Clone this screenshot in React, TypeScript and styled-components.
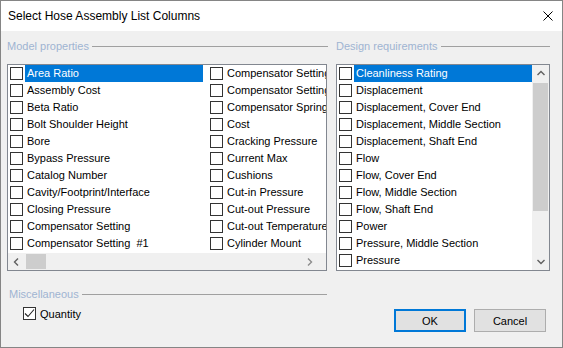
import styled, { createGlobalStyle } from 'styled-components';

const GlobalStyle = createGlobalStyle`
  html, body {
    margin: 0;
    padding: 0;
    background: #ffffff;
  }
  body {
    font-family: "Liberation Sans", Arial, sans-serif;
  }
  * {
    box-sizing: border-box;
  }
`;

const modelItems = [
  'Area Ratio',
  'Assembly Cost',
  'Beta Ratio',
  'Bolt Shoulder Height',
  'Bore',
  'Bypass Pressure',
  'Catalog Number',
  'Cavity/Footprint/Interface',
  'Closing Pressure',
  'Compensator Setting',
  'Compensator Setting  #1',
  'Compensator Setting #2',
  'Compensator Setting #3',
  'Compensator Spring',
  'Cost',
  'Cracking Pressure',
  'Current Max',
  'Cushions',
  'Cut-in Pressure',
  'Cut-out Pressure',
  'Cut-out Temperature',
  'Cylinder Mount',
];

const designItems = [
  'Cleanliness Rating',
  'Displacement',
  'Displacement, Cover End',
  'Displacement, Middle Section',
  'Displacement, Shaft End',
  'Flow',
  'Flow, Cover End',
  'Flow, Middle Section',
  'Flow, Shaft End',
  'Power',
  'Pressure, Middle Section',
  'Pressure',
];

const Chevron = ({ dir, color = '#606060' }: { dir: 'left' | 'right' | 'up' | 'down'; color?: string }) => {
  const paths = {
    left: 'M5 0.5 L1.5 4 L5 7.5',
    right: 'M2 0.5 L5.5 4 L2 7.5',
    up: 'M0.5 5 L4 1.5 L7.5 5',
    down: 'M0.5 2 L4 5.5 L7.5 2',
  };
  const horizontal = dir === 'left' || dir === 'right';
  return (
    <svg width={horizontal ? 7 : 8} height={horizontal ? 8 : 7} viewBox={horizontal ? '0 0 7 8' : '0 0 8 7'}>
      <path d={paths[dir]} fill="none" stroke={color} strokeWidth="1.4" />
    </svg>
  );
};

const CheckBox = ({ checked }: { checked?: boolean }) => (
  <Box>
    {checked && (
      <svg width="11" height="11" viewBox="0 0 11 11">
        <path d="M1 5.5 L4 8.5 L10 1.5" fill="none" stroke="#222" strokeWidth="1.1" />
      </svg>
    )}
  </Box>
);

const App = () => {
  return (
    <>
      <GlobalStyle />
      <Window>
        <TitleBar>
          <Title>Select Hose Assembly List Columns</Title>
          <svg width="10" height="10" viewBox="0 0 10 10">
            <path d="M0.5 0.5 L9.5 9.5 M9.5 0.5 L0.5 9.5" stroke="#000" strokeWidth="1" />
          </svg>
        </TitleBar>
        <Body>
          <Columns>
            <Group>
              <GroupHeader>Model properties</GroupHeader>
              <ListBox $width={320}>
                <ItemsGrid>
                  {modelItems.map((item, i) => (
                    <Item key={item}>
                      <CheckBox />
                      <ItemLabel $selected={i === 0} $width={178}>
                        {item}
                      </ItemLabel>
                    </Item>
                  ))}
                </ItemsGrid>
                <HScrollbar>
                  <ArrowButton>
                    <Chevron dir="left" />
                  </ArrowButton>
                  <HThumb />
                  <Track />
                  <ArrowButton $shift={8}>
                    <Chevron dir="right" color="#8c8c8c" />
                  </ArrowButton>
                </HScrollbar>
              </ListBox>
            </Group>
            <Group>
              <GroupHeader>Design requirements</GroupHeader>
              <ListBox $width={214} $row>
                <RowsArea>
                  {designItems.map((item, i) => (
                    <Item key={item}>
                      <CheckBox />
                      <ItemLabel $selected={i === 0}>{item}</ItemLabel>
                    </Item>
                  ))}
                </RowsArea>
                <VScrollbar>
                  <ArrowButton>
                    <Chevron dir="up" />
                  </ArrowButton>
                  <VThumb />
                  <Track />
                  <ArrowButton>
                    <Chevron dir="down" />
                  </ArrowButton>
                </VScrollbar>
              </ListBox>
            </Group>
          </Columns>
          <Bottom>
            <MiscGroup>
              <GroupHeader>Miscellaneous</GroupHeader>
              <QuantityRow>
                <CheckBox checked />
                <span>Quantity</span>
              </QuantityRow>
            </MiscGroup>
            <Buttons>
              <Button $default>OK</Button>
              <Button>Cancel</Button>
            </Buttons>
          </Bottom>
        </Body>
      </Window>
    </>
  );
};

export default App;

const Window = styled.div`
  width: 563px;
  height: 348px;
  border: 1px solid #858585;
  display: flex;
  flex-direction: column;
  background: #f0f0f0;
  overflow: hidden;
`;

const TitleBar = styled.div`
  height: 30px;
  flex: none;
  background: #ffffff;
  display: flex;
  align-items: center;
  justify-content: space-between;
  padding: 0 9px 0 7px;
`;

const Title = styled.span`
  font-size: 12px;
  color: #000000;
`;

const Body = styled.div`
  flex: 1;
  padding: 7px 12px 0 6px;
  font-size: 11px;
  color: #000000;
`;

const Columns = styled.div`
  display: grid;
  grid-template-columns: 321px 214px;
  column-gap: 8px;
`;

const Group = styled.div`
  display: flex;
  flex-direction: column;
`;

const GroupHeader = styled.div`
  height: 16px;
  display: flex;
  align-items: center;
  gap: 3px;
  color: #9fb4d2;
  font-size: 11px;
  white-space: nowrap;

  &::after {
    content: '';
    flex: 1;
    height: 1px;
    margin-top: 1px;
    background: #a0a0a0;
  }
`;

const ListBox = styled.div<{ $width: number; $row?: boolean }>`
  width: ${({ $width }) => $width}px;
  height: 207px;
  margin-top: 10px;
  border: 1px solid #828790;
  background: #ffffff;
  display: flex;
  flex-direction: ${({ $row }) => ($row ? 'row' : 'column')};
  overflow: hidden;
`;

const ItemsGrid = styled.div`
  height: 188px;
  flex: none;
  display: grid;
  grid-auto-flow: column;
  grid-template-rows: repeat(11, 17px);
  grid-auto-columns: 200px;
  overflow: hidden;
`;

const RowsArea = styled.div`
  flex: 1;
  display: flex;
  flex-direction: column;
`;

const Item = styled.div`
  height: 17px;
  display: flex;
  align-items: center;
  padding-left: 2px;
  gap: 2px;
`;

const Box = styled.div`
  width: 13px;
  height: 13px;
  flex: none;
  border: 1px solid #333333;
  background: #ffffff;
  display: flex;
  align-items: center;
  justify-content: center;
`;

const ItemLabel = styled.div<{ $selected?: boolean; $width?: number }>`
  ${({ $width }) => ($width ? `width: ${$width}px; flex: none;` : 'flex: 1;')}
  height: 17px;
  line-height: 17px;
  padding-left: 2px;
  white-space: pre;
  overflow: hidden;
  background: ${({ $selected }) => ($selected ? '#0078d7' : 'transparent')};
  color: ${({ $selected }) => ($selected ? '#ffffff' : '#000000')};
`;

const HScrollbar = styled.div`
  height: 17px;
  flex: none;
  display: flex;
  background: #f0f0f0;
`;

const VScrollbar = styled.div`
  width: 17px;
  flex: none;
  display: flex;
  flex-direction: column;
  background: #f0f0f0;
`;

const ArrowButton = styled.div<{ $shift?: number }>`
  width: 17px;
  height: 17px;
  flex: none;
  display: flex;
  align-items: center;
  justify-content: center;
  margin-right: ${({ $shift }) => $shift ?? 0}px;
`;

const Track = styled.div`
  flex: 1;
`;

const HThumb = styled.div`
  width: 20px;
  margin: 1px 0 1px 1px;
  background: #cdcdcd;
`;

const VThumb = styled.div`
  height: 128px;
  margin: 1px 1px 0 1px;
  background: #cdcdcd;
`;

const Bottom = styled.div`
  margin-top: 15px;
  display: flex;
  justify-content: space-between;
  align-items: flex-start;
`;

const MiscGroup = styled.div`
  width: 320px;
  padding-left: 2px;
`;

const QuantityRow = styled.div`
  height: 17px;
  margin-top: 3px;
  padding-left: 14px;
  display: flex;
  align-items: center;
  gap: 4px;
`;

const Buttons = styled.div`
  margin-top: 23px;
  margin-right: 4px;
  display: flex;
  gap: 8px;
`;

const Button = styled.button<{ $default?: boolean }>`
  width: 72px;
  height: 23px;
  padding: 0;
  font-family: "Liberation Sans", Arial, sans-serif;
  font-size: 11px;
  color: #000000;
  background: #e1e1e1;
  border: ${({ $default }) => ($default ? '2px solid #0078d7' : '1px solid #adadad')};
`;
